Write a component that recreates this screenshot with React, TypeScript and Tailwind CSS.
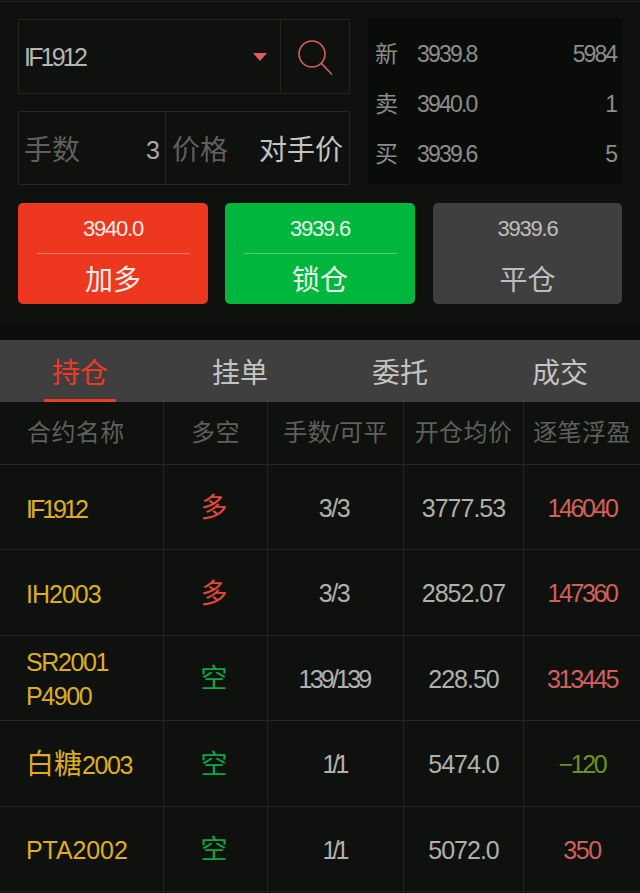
const font = "[font-family:'Liberation_Sans','Noto_Sans_CJK_SC',sans-serif]";

const rows = [
  { name: ['IF1912'], nameTrack: 'tracking-[-3px]', side: '多', lots: '3/3', lotsTrack: 'tracking-[-1.4px]', price: '3777.53', pnl: '146040', pnlTrack: 'tracking-[-2.4px]', pnlColor: 'text-[#d25f59]' },
  { name: ['IH2003'], nameTrack: 'tracking-[-1px]', side: '多', lots: '3/3', lotsTrack: 'tracking-[-1.4px]', price: '2852.07', pnl: '147360', pnlTrack: 'tracking-[-2.4px]', pnlColor: 'text-[#d25f59]' },
  { name: ['SR2001', 'P4900'], nameTrack: 'tracking-[-1.4px]', side: '空', lots: '139/139', lotsTrack: 'tracking-[-2.8px]', price: '228.50', pnl: '313445', pnlTrack: 'tracking-[-2.2px]', pnlColor: 'text-[#d25f59]' },
  { name: ['2003'], prefix: '白糖', nameTrack: 'tracking-[-1.4px]', side: '空', lots: '1/1', lotsTrack: 'tracking-[-4px]', price: '5474.0', pnl: '−120', pnlTrack: 'tracking-[-2.4px]', pnlColor: 'text-[#6f8f22]' },
  { name: ['PTA2002'], nameTrack: 'tracking-[-0.1px]', side: '空', lots: '1/1', lotsTrack: 'tracking-[-4px]', price: '5072.0', pnl: '350', pnlTrack: 'tracking-[-1.4px]', pnlColor: 'text-[#d25f59]' },
];

const quotes = [
  { label: '新', price: '3939.8', vol: '5984' },
  { label: '卖', price: '3940.0', vol: '1' },
  { label: '买', price: '3939.6', vol: '5' },
];

const buttons = [
  { price: '3940.0', label: '加多', box: 'w-[190px] bg-[#ee371f] text-[#fdf0ec]', line: 'bg-[#ee7a68]' },
  { price: '3939.6', label: '锁仓', box: 'w-[190px] bg-[#00b63d] text-[#e6f8ec]', line: 'bg-[#4cca76]' },
  { price: '3939.6', label: '平仓', box: 'ml-px w-[189px] bg-[#3f3f3f] text-[#bdbdbd]', line: 'bg-[#3f3f3f]' },
];

const tabs = ['持仓', '挂单', '委托', '成交'];
const headers = ['合约名称', '多空', '手数/可平', '开仓均价', '逐笔浮盈'];
const columns = 'grid grid-cols-[164px_104px_136px_120px_116px]';

function SearchIcon() {
  return (
    <svg width="40" height="40" viewBox="0 0 40 40" fill="none" stroke="#d9605a" strokeWidth="1.6">
      <circle cx="17" cy="17" r="13" />
      <path d="M26.5 26.5 L37 37.5" />
    </svg>
  );
}

export default function App() {
  return (
    <div className={`${font} flex h-[893px] w-[640px] flex-col overflow-hidden bg-[#0e110d]`}>
      <div className="mt-px h-px bg-[#232622]" />

      <div className="flex h-[200px] shrink-0 gap-[18px] pl-[18px] pr-[18px] pt-[17px]">
        <div className="flex w-[332px] flex-col gap-[17px]">
          <div className="flex h-[75px] border border-[#23251f]">
            <div className="flex flex-1 items-center justify-between pl-[5px] pr-[13px] pt-[3px]">
              <span className="text-[25px] tracking-[-2.8px] text-[#b5b5b1]">IF1912</span>
              <span className="mb-[3px] h-0 w-0 border-x-[7px] border-t-[8px] border-x-transparent border-t-[#d9605a]" />
            </div>
            <div className="flex w-[69px] items-center justify-center border-l border-[#23251f]">
              <SearchIcon />
            </div>
          </div>
          <div className="flex h-[74px] border border-[#23251f] pt-[5px] text-[28px]">
            <div className="flex w-[146px] items-center justify-between pl-[5px] pr-[5px]">
              <span className="text-[#5f5f5c]">手数</span>
              <span className="text-[25px] text-[#a8a8a4]">3</span>
            </div>
            <div className="-mt-[5px] w-px bg-[#23251f]" />
            <div className="flex flex-1 items-center justify-between pl-[6px] pr-[6px]">
              <span className="text-[#5f5f5c]">价格</span>
              <span className="text-[#c4c4c0]">对手价</span>
            </div>
          </div>
        </div>

        <div className="flex h-[165px] w-[254px] flex-col justify-center gap-[3px] bg-[#090c09] pl-[7px] pr-[6px] pt-[5px]">
          {quotes.map((q) => (
            <div key={q.label} className="flex h-[47px] items-center text-[#8c8c89]">
              <span className="w-[42px] text-[23px]">{q.label}</span>
              <span className="flex-1 text-[23px] tracking-[-1.8px]">{q.price}</span>
              <span className="text-[23px] tracking-[-2px]">{q.vol}</span>
            </div>
          ))}
        </div>
      </div>

      <div className="flex shrink-0 gap-[17px] px-[18px] pt-[1px]">
        {buttons.map((b) => (
          <div key={b.label} className={`flex h-[101px] flex-col items-center rounded-[5px] ${b.box}`}>
            <div className="flex h-[50px] items-center text-[22px] tracking-[-1.2px]">{b.price}</div>
            <div className={`h-px w-[153px] ${b.line}`} />
            <div className="flex flex-1 items-center pt-[3px] text-[28px]">{b.label}</div>
          </div>
        ))}
      </div>

      <div className="mt-[18px] h-[18px] shrink-0 bg-[#0a0d09]" />

      <div className="grid h-[62px] shrink-0 grid-cols-4 bg-[#3f3f3f] text-[28px]">
        {tabs.map((t, i) => (
          <div key={t} className="relative flex items-center justify-center pt-[5px]">
            <span className={i === 0 ? 'text-[#ee3a24]' : 'text-[#c4c4c0]'}>{t}</span>
            {i === 0 && <span className="absolute bottom-0 left-[44px] h-[3px] w-[72px] bg-[#ee3a24]" />}
          </div>
        ))}
      </div>

      <div className={`${columns} h-[63px] shrink-0 border-b border-[#232521] text-[24px] text-[#5f5f5c]`}>
        {headers.map((h, i) => (
          <div
            key={h}
            className={`flex items-center tracking-[0.4px] ${i === 0 ? 'pl-[27px]' : 'justify-center'} ${
              i < 4 ? 'border-r border-[#232521]' : ''
            }`}
          >
            {h}
          </div>
        ))}
      </div>

      {rows.map((r) => (
        <div key={r.name[0]} className={`${columns} h-[85.4px] shrink-0 border-b border-[#232521]`}>
          <div
            className={`flex flex-col justify-center border-r border-[#232521] pl-[26px] pt-[3px] text-[25px] leading-[34px] text-[#dfae20] ${r.nameTrack}`}
          >
            {r.name.map((n) => (
              <span key={n}>
                {r.prefix && <span className="text-[28px] tracking-normal">{r.prefix}</span>}
                {n}
              </span>
            ))}
          </div>
          <div
            className={`flex items-center justify-center border-r border-[#232521] pr-[3px] pt-[3px] text-[27px] ${
              r.side === '多' ? 'text-[#e0493c]' : 'text-[#0fa544]'
            }`}
          >
            {r.side}
          </div>
          <div
            className={`flex items-center justify-center border-r border-[#232521] pr-[3px] pt-[3px] text-[25px] text-[#b0b0ac] ${r.lotsTrack}`}
          >
            {r.lots}
          </div>
          <div className="flex items-center justify-center border-r border-[#232521] pt-[3px] text-[25px] tracking-[-1px] text-[#b0b0ac]">
            {r.price}
          </div>
          <div className={`flex items-center justify-center pt-[3px] text-[25px] ${r.pnlTrack} ${r.pnlColor}`}>
            {r.pnl}
          </div>
        </div>
      ))}
    </div>
  );
}
